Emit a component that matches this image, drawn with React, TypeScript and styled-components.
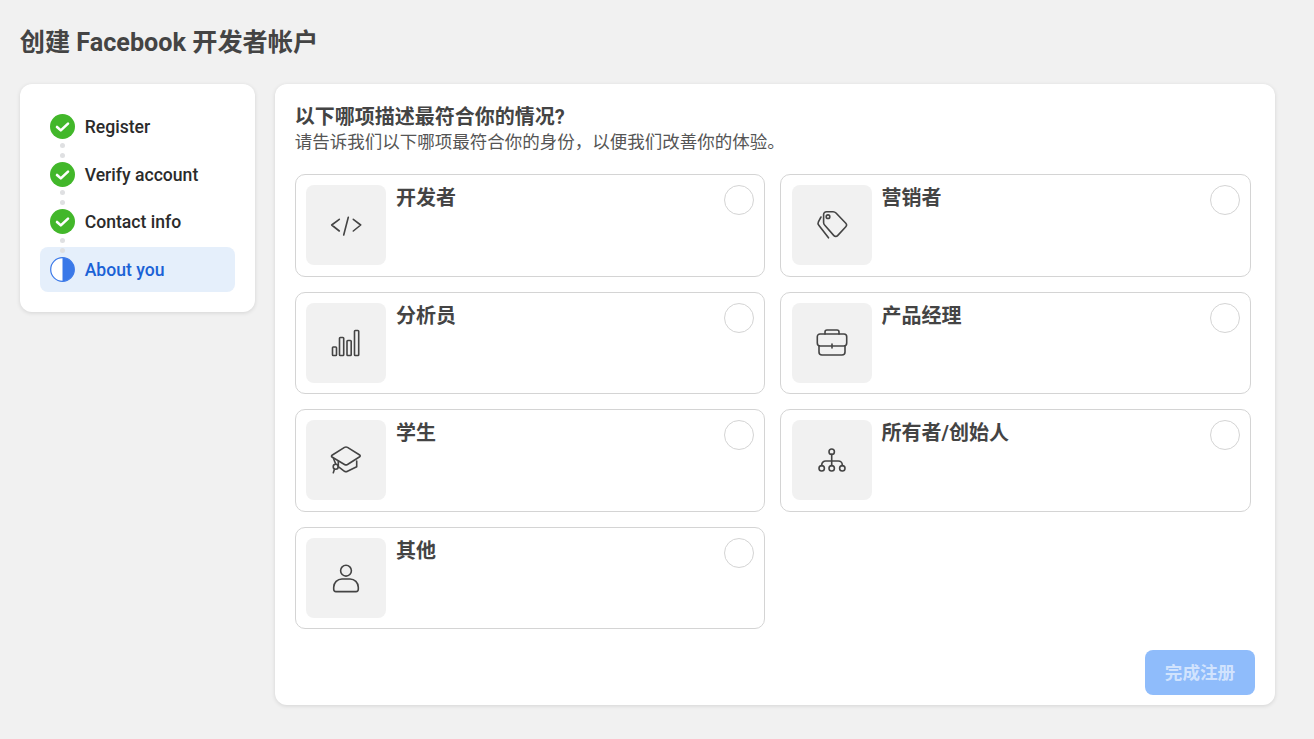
import React from 'react';
import styled, { createGlobalStyle } from 'styled-components';

const GlobalStyle = createGlobalStyle`
  html, body {
    margin: 0;
    padding: 0;
    background: #f1f1f1;
  }
  body {
    font-family: Roboto, "Noto Sans CJK SC", sans-serif;
    color: #444;
  }
`;

const Page = styled.div`
  padding: 24px 39px 34px 19.7px;
`;

const Title = styled.h1`
  margin: 0 0 23px;
  font-size: 25.2px;
  line-height: 37px;
  font-weight: 700;
  color: #444;
`;

const Layout = styled.div`
  display: flex;
  align-items: flex-start;
  gap: 20px;
`;

const Panel = styled.div`
  background: #fff;
  border-radius: 12px;
  box-shadow: 0 1px 4px rgba(0, 0, 0, 0.12);
`;

const Sidebar = styled(Panel)`
  flex: 0 0 235px;
  box-sizing: border-box;
  height: 228px;
  padding: 20.3px 20px 0;
  display: flex;
  flex-direction: column;
  gap: 2.5px;
`;

const Step = styled.div<{ $active?: boolean }>`
  position: relative;
  height: 45px;
  display: flex;
  align-items: center;
  gap: 10px;
  padding-left: 10px;
  border-radius: 8px;
  font-size: 17.6px;
  font-weight: 500;
  color: ${(p) => (p.$active ? '#1a62d6' : '#2b2b2b')};
  background: ${(p) => (p.$active ? '#e5effb' : 'transparent')};
`;

const StepLabel = styled.span`
  padding-top: 0.8px;
`;

const StepDots = styled.span`
  position: absolute;
  left: 20px;
  top: -9px;
  width: 5px;
  height: 15px;
  display: flex;
  flex-direction: column;
  justify-content: space-between;

  &::before,
  &::after {
    content: '';
    width: 5px;
    height: 5px;
    border-radius: 50%;
    background: #dfe0e2;
  }
`;

const Main = styled(Panel)`
  flex: 0 0 1000.3px;
  box-sizing: border-box;
  height: 621px;
  padding: 21px 20px 10px;
  display: flex;
  flex-direction: column;
`;

const Heading = styled.h2`
  margin: 0;
  font-size: 20px;
  line-height: 25px;
  font-weight: 700;
  color: #444;
`;

const Subheading = styled.p`
  margin: 0 0 19px;
  font-size: 17.5px;
  line-height: 25px;
  color: #555;
`;

const Options = styled.div`
  width: 956px;
  display: grid;
  grid-template-columns: 470.5px 470.5px;
  grid-auto-rows: 102.5px;
  gap: 15px;
`;

const Option = styled.label`
  position: relative;
  box-sizing: border-box;
  display: flex;
  gap: 10px;
  padding: 10px 10px 10px 10.4px;
  background: #fff;
  border: 1px solid #d4d4d4;
  border-radius: 10px;
  cursor: pointer;
`;

const Thumb = styled.span`
  flex: 0 0 80px;
  height: 80px;
  display: flex;
  align-items: center;
  justify-content: center;
  background: #f1f1f1;
  border-radius: 8px;
`;

const OptionLabel = styled.span`
  flex: 1;
  font-size: 20px;
  line-height: 27px;
  font-weight: 700;
  color: #444;
`;

const Radio = styled.span`
  flex: 0 0 30px;
  box-sizing: border-box;
  height: 30px;
  border: 1px solid #d4d4d4;
  border-radius: 50%;
  background: #fff;
`;

const Footer = styled.div`
  margin-top: auto;
  display: flex;
  justify-content: flex-end;
`;

const FinishButton = styled.button`
  width: 110px;
  height: 45px;
  padding: 0 0 2px;
  border: 0;
  border-radius: 8px;
  background: #8fbcfb;
  color: rgba(255, 255, 255, 0.6);
  font-family: inherit;
  font-size: 17.6px;
  font-weight: 700;
`;

const Glyph = styled.svg.attrs({
  viewBox: '0 0 32 32',
  fill: 'none',
  stroke: '#444',
  strokeWidth: 1.6,
  strokeLinecap: 'round',
  strokeLinejoin: 'round',
})`
  width: 32px;
  height: 32px;
  display: block;
`;

const StepIconSvg = styled.svg`
  flex: 0 0 25px;
  width: 25px;
  height: 25px;
  display: block;
`;

const DoneIcon = () => (
  <StepIconSvg viewBox="0 0 25 25">
    <circle cx="12.5" cy="12.5" r="12.5" fill="#42b72a" />
    <path d="M7 13l3.8 3.4L18 9.6" fill="none" stroke="#fff" strokeWidth="2.6" strokeLinecap="round" strokeLinejoin="round" />
  </StepIconSvg>
);

const HalfIcon = () => (
  <StepIconSvg viewBox="0 0 25 25">
    <circle cx="12.5" cy="12.5" r="11.8" fill="#fff" stroke="#3a78e8" strokeWidth="1.2" />
    <path d="M12.5 0.7a11.8 11.8 0 0 1 0 23.6z" fill="#3a78e8" />
  </StepIconSvg>
);

const CodeIcon = () => (
  <Glyph>
    <path d="M9.3 10.3L1.7 16l7.6 6M18.3 8.3L13.7 26M23.3 10.3l7.4 5.7-7.4 6" />
  </Glyph>
);

const TagIcon = () => (
  <Glyph>
    <path d="M10.500 2.700h6.500a4 4 0 0 1 3 1.300l9.800 10.300a2.500 2.500 0 0 1 0 3.400l-8.200 8.900a2.500 2.500 0 0 1-3.700 0L8.800 16.300a4 4 0 0 1-1.200-3V5.600a2.900 2.900 0 0 1 2.900-2.900z" />
    <circle cx="12" cy="7.700" r="1.800" />
    <path d="M5 8L2.400 12.800a3 3 0 0 0 .4 3.400L12.500 28.800" />
  </Glyph>
);

const BarsIcon = () => (
  <Glyph>
    <rect x="2.500" y="20" width="4" height="8.500" rx="0.800" />
    <rect x="9.500" y="10.500" width="4.200" height="18" rx="0.800" />
    <rect x="17" y="13.500" width="4.200" height="15" rx="0.800" />
    <rect x="24.500" y="3.500" width="4.200" height="25" rx="0.800" />
  </Glyph>
);

const CaseIcon = () => (
  <Glyph>
    <path d="M9 7V5a2 2 0 0 1 2-2h10a2 2 0 0 1 2 2v2" />
    <path d="M4 7h24a2.700 2.700 0 0 1 2.700 2.700V16a3 3 0 0 1-3 3H4.300a3 3 0 0 1-3-3V9.700A2.700 2.700 0 0 1 4 7z" />
    <path d="M3 19v6a3 3 0 0 0 3 3h20a3 3 0 0 0 3-3v-6M16 17v4" />
  </Glyph>
);

const CapIcon = () => (
  <Glyph>
    <path d="M14.500 3.400a3 3 0 0 1 3 0L29.700 11a1 1 0 0 1 0 1.700L17.500 20.500a3 3 0 0 1-3 0L2 13a1 1 0 0 1 0-1.700z" />
    <path d="M8.300 17v5.700L14.500 27.300a3 3 0 0 0 3 0l9.200-4.600V17" />
    <path d="M3.500 14.500L5.700 20" />
    <circle cx="5.700" cy="22.700" r="2.500" />
    <path d="M4.500 25L3.300 28.700" />
  </Glyph>
);

const OrgIcon = () => (
  <Glyph>
    <circle cx="15.700" cy="7.700" r="2.700" />
    <circle cx="5.700" cy="24.300" r="2.700" />
    <circle cx="15.700" cy="24.300" r="2.700" />
    <circle cx="26.300" cy="24.300" r="2.700" />
    <path d="M15.700 10.400v11.200M5.700 21.600v-.600a4 4 0 0 1 4-4h12.600a4 4 0 0 1 4 4v.600" />
  </Glyph>
);

const PersonIcon = () => (
  <Glyph>
    <circle cx="16" cy="8.700" r="5.400" />
    <path d="M12 17h8a8.300 8.300 0 0 1 8.300 8.300v2a2.300 2.300 0 0 1-2.300 2.300H6a2.300 2.300 0 0 1-2.300-2.300v-2A8.300 8.300 0 0 1 12 17z" />
  </Glyph>
);

const steps = ['Register', 'Verify account', 'Contact info'];

const options = [
  { label: '开发者', icon: <CodeIcon /> },
  { label: '营销者', icon: <TagIcon /> },
  { label: '分析员', icon: <BarsIcon /> },
  { label: '产品经理', icon: <CaseIcon /> },
  { label: '学生', icon: <CapIcon /> },
  { label: '所有者/创始人', icon: <OrgIcon /> },
  { label: '其他', icon: <PersonIcon /> },
];

export default function App() {
  return (
    <>
      <GlobalStyle />
      <Page>
        <Title>创建 Facebook 开发者帐户</Title>
        <Layout>
          <Sidebar>
            {steps.map((name, i) => (
              <Step key={name}>
                {i > 0 && <StepDots />}
                <DoneIcon />
                <StepLabel>{name}</StepLabel>
              </Step>
            ))}
            <Step $active>
              <StepDots />
              <HalfIcon />
              <StepLabel>About you</StepLabel>
            </Step>
          </Sidebar>
          <Main>
            <Heading>以下哪项描述最符合你的情况?</Heading>
            <Subheading>请告诉我们以下哪项最符合你的身份，以便我们改善你的体验。</Subheading>
            <Options>
              {options.map((o) => (
                <Option key={o.label}>
                  <Thumb>{o.icon}</Thumb>
                  <OptionLabel>{o.label}</OptionLabel>
                  <Radio />
                </Option>
              ))}
            </Options>
            <Footer>
              <FinishButton type="button">完成注册</FinishButton>
            </Footer>
          </Main>
        </Layout>
      </Page>
    </>
  );
}
